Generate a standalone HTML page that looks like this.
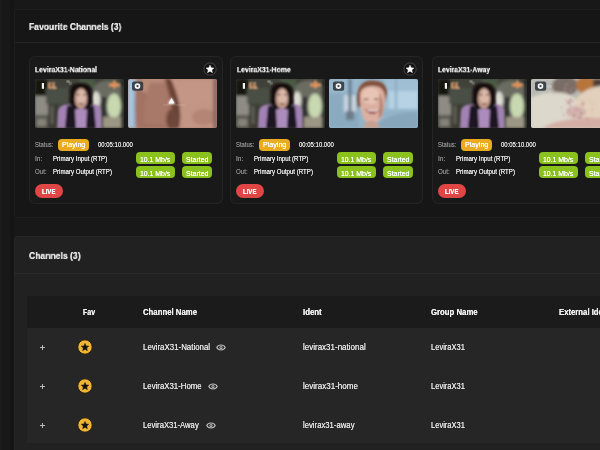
<!DOCTYPE html>
<html><head><meta charset="utf-8">
<style>
*{margin:0;padding:0;box-sizing:border-box}
html,body{width:600px;height:450px;overflow:hidden;background:#181818;font-family:"Liberation Sans",sans-serif;color:#e8e8e8}
.abs{position:absolute}
.abs svg{display:block}
.tx{position:absolute;white-space:nowrap;line-height:1;transform-origin:0 0;text-shadow:0 0 0.5px currentColor}
#fav{position:absolute;left:14px;top:9px;width:600px;height:209px;background:#161616;border:1px solid #1e1e1e;border-right:none;border-radius:3px 0 0 3px}
#favdiv{position:absolute;left:15px;top:42px;width:600px;height:1px;background:#252525}
.card{position:absolute;top:56px;width:193.5px;height:148px;background:#191919;box-shadow:inset 0 0 0 1px #242424;border-radius:6px}
.star{position:absolute;left:173.6px;top:6px;width:14px;height:14px}
.star svg{display:block}
.th{position:absolute;top:23px;width:89px;height:49px;border-radius:2px;overflow:hidden}
.th svg{display:block}
.badge{position:absolute;border-radius:4px}
.yel{background:#eaab1e}
.grn{background:#8bc11d}
.live{position:absolute;left:6px;top:128px;width:28px;height:14px;border-radius:7px;background:#e04646}
#ch{position:absolute;left:13.5px;top:236px;width:600px;height:230px;background:#212121;border-radius:4px;box-shadow:inset 1px 1px 0 #252525}
#chdiv{position:absolute;left:14px;top:273px;width:600px;height:1px;background:#2a2a2a}
#thead{position:absolute;left:27px;top:296px;width:600px;height:32px;background:#1b1b1b}
#tbody{position:absolute;left:27px;top:327.5px;width:600px;height:115.5px;background:#262626}
#band{position:absolute;left:10px;top:0;width:4px;height:450px;background:#151515}
#band0{position:absolute;left:0;top:0;width:2px;height:450px;background:#1b1b1b}

</style></head><body>
<svg width="0" height="0" style="position:absolute">
<defs>
<filter id="bl" x="-10%" y="-10%" width="120%" height="120%"><feGaussianBlur stdDeviation="0.9"/></filter>
<filter id="bl2" x="-10%" y="-10%" width="120%" height="120%"><feGaussianBlur stdDeviation="1.6"/></filter>
<g id="woman">
<rect width="89" height="49" fill="#40423a"/>
<g filter="url(#bl2)">
<rect x="0" y="0" width="12" height="18" fill="#121311"/>
<rect x="0" y="17" width="13" height="20" fill="#8e8c84"/>
<rect x="0" y="36" width="13" height="13" fill="#5a5850"/>
<rect x="2" y="40" width="9" height="7" fill="#86847a"/>
<rect x="11" y="9" width="22" height="16" fill="#485044"/>
<rect x="13" y="25" width="10" height="24" fill="#3a3a32"/>
<rect x="16" y="27" width="2" height="18" fill="#6a6a60"/>
<rect x="44" y="0" width="16" height="10" fill="#4c5a42"/>
<path d="M58 49 L58 14 C58 4 66 1 74 1 C82 1 87 6 87 14 L87 49 Z" fill="#6a6c62"/>
<ellipse cx="61" cy="21" rx="4.2" ry="8.5" fill="#dcdcd2"/>
<rect x="66" y="18" width="6" height="31" fill="#303230"/>
<ellipse cx="79" cy="27" rx="7" ry="12.5" fill="#c8d8b0"/>
<rect x="68" y="38" width="19" height="11" fill="#9c9684"/>
<rect x="86" y="0" width="3" height="49" fill="#1e201c"/>
</g>
<circle cx="33" cy="2.5" r="1.2" fill="#d8d8c8" filter="url(#bl)"/>
<circle cx="35.3" cy="4.3" r="1.1" fill="#c8c8b8" filter="url(#bl)"/>
<g filter="url(#bl)">
<path d="M35 16 C34 6 39 4 46 4 C53 4 58 7 57 16 L58.5 38 L34 38 Z" fill="#15110f"/>
<ellipse cx="46" cy="19.5" rx="6.4" ry="10.5" fill="#c09a8a"/>
<ellipse cx="46.5" cy="18" rx="4.5" ry="7.5" fill="#dab8a8"/>
<rect x="41.5" y="15" width="3" height="1.3" fill="#6a4a40"/><rect x="48" y="15" width="3" height="1.3" fill="#6a4a40"/>
<rect x="44" y="24" width="4.5" height="1.5" fill="#8a5a50"/>
<path d="M22 49 L23 32 C24 27 28 25.5 33 25.5 L37 26 L37 49 Z" fill="#a282b4"/>
<path d="M56 26 L59 25.5 C63 25.5 66 28 66 33 L66.5 49 L56 49 Z" fill="#a282b4"/>
<path d="M30 49 L32 27 L39 26 L42 49 Z M50 49 L53 26 L59 27 L61 49 Z" fill="#1e1820"/>
<path d="M41 49 L40 31 C42 29 50 29 52 31 L51 49 Z" fill="#ac8cbc"/>
</g>
<rect x="6.8" y="4" width="2.2" height="5.8" fill="#f2f2f2"/>
<path d="M13 3.5 h3 v2 h-1.5 v2 h2.5 v2 h-4 Z M17.5 3 h2 v5 h2 v2 h-4 Z" fill="#f2aa78" filter="url(#bl)"/>
<path d="M74 4.5 h11 v3 h-11 Z M78.2 1.5 h2.5 v8 h-2.5 Z" fill="#e8945c" filter="url(#bl)"/>
</g>

<g id="skin">
<rect width="89" height="49" fill="#b08070"/>
<g filter="url(#bl2)">
<path d="M0 0 L9 0 C7 12 6 28 8 49 L0 49 Z" fill="#98bcd8"/>
<path d="M0 0 L5 0 L4 49 L0 49 Z" fill="#a8c8e2"/>
<path d="M9 0 L41 0 C44 14 50 32 47 49 L8 49 C6 28 7 12 9 0 Z" fill="#a27262"/>
<ellipse cx="24" cy="6" rx="14" ry="9" fill="#b88a78"/>
<path d="M22 4 L38 4 C40 18 42 30 38 45 L16 45 C14 30 18 15 22 4 Z" fill="#a87868"/>
<path d="M37 0 C42 16 48 34 40 49 L52 49 C56 34 49 14 43 0 Z" fill="#6a4236"/>
<ellipse cx="44" cy="40" rx="6" ry="10" fill="#6e463a"/>
<path d="M43 0 L89 0 L89 49 L51 49 C55 34 50 14 43 0 Z" fill="#c39585"/>
<ellipse cx="68" cy="14" rx="18" ry="11" fill="#c49686"/>
<ellipse cx="76" cy="38" rx="12" ry="8" fill="#b48474"/>
<rect x="85" y="0" width="4" height="49" fill="#8a6a60"/>
</g>
<path d="M43.5 18.5 L47 25 L40 25 Z" fill="#f4f4f4" filter="url(#bl)"/>
<path d="M43.5 19 L46.5 24.5 L40.5 24.5 Z" fill="#fafafa"/>
<rect x="35" y="25.5" width="22" height="0.9" fill="#e8d8d0" opacity="0.3"/>
</g>

<g id="smile">
<rect width="89" height="49" fill="#94b4ca"/>
<g filter="url(#bl2)">
<rect x="0" y="0" width="30" height="49" fill="#8aaac0"/>
<rect x="0" y="0" width="30" height="14" fill="#9ab8cc"/>
<rect x="15" y="16" width="12" height="17" fill="#cad8e2"/>
<rect x="19.5" y="0" width="3" height="40" fill="#5e7284"/>
<rect x="17" y="32" width="8" height="9" fill="#6c7c86"/>
<rect x="56" y="0" width="33" height="30" fill="#a0bed4"/>
<rect x="60" y="12" width="29" height="18" fill="#b6d2e4"/>
<path d="M46 49 C52 40 62 34 89 33 L89 49 Z" fill="#86a6bc"/>
<rect x="66" y="0" width="2" height="30" fill="#88a8c0"/>
</g>
<g filter="url(#bl)">
<path d="M29 28 C26 9 32 1.5 43 1.5 C53 1.5 58 6 58 14 L56 24 C53 12 45 8 36 11 C33 16 32.5 22 31.5 28 Z" fill="#84523e"/>
<path d="M31 16 C31 9 37 7 44 7 C52 7 56 11 56 20 C56 33 52 44 43 45 C35 45 31 36 31 16 Z" fill="#dcb0a0"/>
<ellipse cx="42" cy="17" rx="9" ry="8" fill="#e8c4b4"/>
<path d="M50 14 C54 18 55 28 53 36 L49 40 C51 30 51 20 50 14 Z" fill="#b88474"/>
<rect x="35" y="19.5" width="4.5" height="1.6" fill="#8a6058"/><rect x="45" y="19.5" width="4.5" height="1.6" fill="#8a6058"/>
<path d="M36 30 C39 36 46 37 51 31 Z" fill="#9a4a4a"/>
<path d="M37.5 30.6 L49.5 30.8 L48.5 32.4 L38.8 32.2 Z" fill="#f2e8e4"/>
<path d="M34 49 C35 44 38 42 43 42 C48 42 50 46 51 49 Z" fill="#c8a090"/>
</g>
</g>

<g id="cream">
<rect width="89" height="49" fill="#cfc6bc"/>
<g filter="url(#bl2)">
<rect x="0" y="0" width="89" height="20" fill="#b8b8b2"/>
<ellipse cx="34" cy="7" rx="13" ry="10" fill="#7a6c66"/>
<ellipse cx="55" cy="6" rx="10" ry="9" fill="#b8743a"/>
<rect x="62" y="0" width="27" height="8" fill="#4e3e34"/>
<path d="M0 49 L0 19 C8 14 22 12 34 14 C42 16 48 22 50 30 L50 49 Z" fill="#dcd8cc"/>
<path d="M44 22 C48 14 58 8 70 7 C78 7 89 8 89 12 L89 40 L52 40 Z" fill="#e2d0bc"/>
<ellipse cx="45" cy="33" rx="10" ry="6" fill="#d2b2ac"/>
<path d="M12 49 C26 39 55 38 89 39 L89 49 Z" fill="#d4aea4"/>
</g>
<g opacity="0.6" filter="url(#bl)"><circle cx="23.8" cy="11.6" r="0.65" fill="#b09890"/><circle cx="35.1" cy="5.5" r="1.05" fill="#b09890"/><circle cx="22.8" cy="14.4" r="0.72" fill="#b09890"/><circle cx="41.2" cy="9.5" r="1.10" fill="#b09890"/><circle cx="29.8" cy="12.8" r="0.56" fill="#b09890"/><circle cx="36.2" cy="9.7" r="0.79" fill="#b09890"/><circle cx="33.9" cy="13.0" r="0.83" fill="#b09890"/><circle cx="36.6" cy="5.8" r="0.90" fill="#b09890"/><circle cx="22.8" cy="7.4" r="0.64" fill="#b09890"/><circle cx="33.0" cy="12.8" r="0.94" fill="#b09890"/><circle cx="33.7" cy="9.3" r="1.19" fill="#b09890"/><circle cx="38.5" cy="2.4" r="0.82" fill="#b09890"/><circle cx="39.3" cy="11.7" r="1.17" fill="#b09890"/><circle cx="34.5" cy="13.6" r="1.10" fill="#b09890"/></g>
<g opacity="0.75" filter="url(#bl)"><circle cx="37.6" cy="30.9" r="0.62" fill="#a86070"/><circle cx="50.0" cy="21.3" r="0.41" fill="#a86070"/><circle cx="38.3" cy="24.7" r="1.00" fill="#a86070"/><circle cx="47.3" cy="31.0" r="0.64" fill="#b86a7a"/><circle cx="37.4" cy="23.0" r="0.96" fill="#a86070"/><circle cx="53.7" cy="33.4" r="0.44" fill="#c07a8a"/><circle cx="39.6" cy="20.6" r="0.92" fill="#a86070"/><circle cx="49.0" cy="38.4" r="0.63" fill="#a86070"/><circle cx="42.6" cy="36.0" r="0.67" fill="#b86a7a"/><circle cx="58.1" cy="21.9" r="0.48" fill="#b86a7a"/><circle cx="38.3" cy="33.4" r="0.87" fill="#d09aa4"/><circle cx="43.5" cy="36.7" r="0.74" fill="#a86070"/><circle cx="48.7" cy="38.1" r="0.81" fill="#c07a8a"/><circle cx="57.4" cy="39.8" r="0.80" fill="#b86a7a"/><circle cx="52.4" cy="26.5" r="0.73" fill="#c07a8a"/><circle cx="52.8" cy="24.2" r="0.90" fill="#d09aa4"/><circle cx="39.1" cy="21.3" r="0.91" fill="#a86070"/><circle cx="32.8" cy="36.0" r="0.65" fill="#b86a7a"/><circle cx="30.6" cy="28.5" r="0.65" fill="#c07a8a"/><circle cx="31.4" cy="32.3" r="0.43" fill="#d09aa4"/><circle cx="47.6" cy="38.4" r="0.57" fill="#b86a7a"/><circle cx="62.0" cy="26.2" r="0.45" fill="#c07a8a"/><circle cx="60.4" cy="39.4" r="0.57" fill="#d09aa4"/><circle cx="35.0" cy="20.8" r="0.92" fill="#d09aa4"/><circle cx="41.5" cy="22.8" r="0.92" fill="#a86070"/><circle cx="44.7" cy="30.4" r="0.79" fill="#c07a8a"/><circle cx="49.8" cy="38.8" r="0.70" fill="#a86070"/><circle cx="50.3" cy="34.3" r="0.96" fill="#a86070"/><circle cx="61.3" cy="30.4" r="0.73" fill="#c07a8a"/><circle cx="55.2" cy="39.7" r="0.59" fill="#a86070"/><circle cx="49.7" cy="32.6" r="0.44" fill="#d09aa4"/><circle cx="44.9" cy="33.6" r="0.61" fill="#d09aa4"/><circle cx="53.6" cy="20.4" r="0.44" fill="#c07a8a"/><circle cx="60.8" cy="25.0" r="0.67" fill="#d09aa4"/><circle cx="35.7" cy="23.7" r="0.85" fill="#d09aa4"/><circle cx="39.6" cy="27.5" r="0.86" fill="#c07a8a"/><circle cx="61.1" cy="33.7" r="0.48" fill="#b86a7a"/><circle cx="50.9" cy="25.4" r="0.60" fill="#a86070"/><circle cx="50.8" cy="21.9" r="0.76" fill="#d09aa4"/><circle cx="51.6" cy="24.5" r="0.89" fill="#b86a7a"/></g>
<path d="M16 7.2 L18 6.2 L18 8.2 Z M18.5 7.2 L20.5 6.2 L20.5 8.2 Z" fill="#f0f0f0" filter="url(#bl)"/>
</g>

<g id="cam">
<rect x="0" y="0" width="11.2" height="9.2" rx="2" fill="#2c343c" opacity="0.88"/>
<circle cx="5.5" cy="4.6" r="2.0" fill="none" stroke="#f4f4f4" stroke-width="1.7"/>
</g>
</defs>
</svg>

<div id="band0"></div><div id="band"></div>
<div id="fav"></div>
<div id="favdiv"></div>
<div class="card" style="left:29px">
<div class="star"><svg width="14" height="14" viewBox="0 0 14 14"><circle cx="7" cy="7" r="6.2" fill="#121212" stroke="#3a3a3a" stroke-width="1.2"/><path d="M7.00 3.10 L8.12 5.76 L10.99 6.00 L8.81 7.89 L9.47 10.70 L7.00 9.20 L4.53 10.70 L5.19 7.89 L3.01 6.00 L5.88 5.76 Z" fill="#fff" stroke="#fff" stroke-width="0.4" stroke-linejoin="round"/></svg></div>
<div class="th" style="left:6px"><svg width="89" height="49" viewBox="0 0 89 49"><use href="#woman"/></svg></div>
<div class="th" style="left:99px"><svg width="89" height="49" viewBox="0 0 89 49"><use href="#skin"/><use href="#cam" x="4" y="2.5"/></svg></div>
<div class="badge yel" style="left:29px;top:83px;width:31px;height:12px"></div>
<div class="badge grn" style="left:107px;top:96.3px;width:39px;height:11.5px"></div>
<div class="badge grn" style="left:153px;top:96.3px;width:30px;height:11.5px"></div>
<div class="badge grn" style="left:107px;top:110.4px;width:39px;height:11.5px"></div>
<div class="badge grn" style="left:153px;top:110.4px;width:30px;height:11.5px"></div>
<div class="live"></div>
</div>
<div class="card" style="left:229.8px">
<div class="star"><svg width="14" height="14" viewBox="0 0 14 14"><circle cx="7" cy="7" r="6.2" fill="#121212" stroke="#3a3a3a" stroke-width="1.2"/><path d="M7.00 3.10 L8.12 5.76 L10.99 6.00 L8.81 7.89 L9.47 10.70 L7.00 9.20 L4.53 10.70 L5.19 7.89 L3.01 6.00 L5.88 5.76 Z" fill="#fff" stroke="#fff" stroke-width="0.4" stroke-linejoin="round"/></svg></div>
<div class="th" style="left:6px"><svg width="89" height="49" viewBox="0 0 89 49"><use href="#woman"/></svg></div>
<div class="th" style="left:99px"><svg width="89" height="49" viewBox="0 0 89 49"><use href="#smile"/><use href="#cam" x="4" y="2.5"/></svg></div>
<div class="badge yel" style="left:29px;top:83px;width:31px;height:12px"></div>
<div class="badge grn" style="left:107px;top:96.3px;width:39px;height:11.5px"></div>
<div class="badge grn" style="left:153px;top:96.3px;width:30px;height:11.5px"></div>
<div class="badge grn" style="left:107px;top:110.4px;width:39px;height:11.5px"></div>
<div class="badge grn" style="left:153px;top:110.4px;width:30px;height:11.5px"></div>
<div class="live"></div>
</div>
<div class="card" style="left:432px">
<div class="th" style="left:6px"><svg width="89" height="49" viewBox="0 0 89 49"><use href="#woman"/></svg></div>
<div class="th" style="left:99px"><svg width="89" height="49" viewBox="0 0 89 49"><use href="#cream"/><use href="#cam" x="4" y="2.5"/></svg></div>
<div class="badge yel" style="left:29px;top:83px;width:31px;height:12px"></div>
<div class="badge grn" style="left:107px;top:96.3px;width:39px;height:11.5px"></div>
<div class="badge grn" style="left:153px;top:96.3px;width:30px;height:11.5px"></div>
<div class="badge grn" style="left:107px;top:110.4px;width:39px;height:11.5px"></div>
<div class="badge grn" style="left:153px;top:110.4px;width:30px;height:11.5px"></div>
<div class="live"></div>
</div>
<div id="ch"></div>
<div id="chdiv"></div>
<div id="thead"></div>
<div id="tbody"></div>
<div class="abs" style="left:39.1px;top:344.0px"><svg width="7" height="7" viewBox="0 0 7 7"><path d="M3.5 1 V6 M1 3.5 H6" stroke="#c8c8c8" stroke-width="0.9"/></svg></div>
<div class="abs" style="left:77px;top:339.0px"><svg width="16" height="16" viewBox="0 0 16 16"><circle cx="8" cy="8" r="7.2" fill="#efb537" stroke="#2a1f08" stroke-width="1"/><path d="M8.00 4.40 L9.03 6.98 L11.80 7.16 L9.66 8.94 L10.35 11.64 L8.00 10.15 L5.65 11.64 L6.34 8.94 L4.20 7.16 L6.97 6.98 Z" fill="#111" stroke="#111" stroke-width="0.5" stroke-linejoin="round"/></svg></div>
<div class="abs" style="left:216.3px;top:343.7px"><svg width="10" height="7" viewBox="0 0 10 7"><path d="M0.8 3.5 C2.2 0.2 7.8 0.2 9.2 3.5 C7.8 6.8 2.2 6.8 0.8 3.5 Z" fill="none" stroke="#bdbdbd" stroke-width="1.05"/><circle cx="5" cy="3.5" r="1.5" fill="#bdbdbd"/><circle cx="5" cy="3.5" r="0.6" fill="#262626"/></svg></div>
<div class="abs" style="left:39.1px;top:383.0px"><svg width="7" height="7" viewBox="0 0 7 7"><path d="M3.5 1 V6 M1 3.5 H6" stroke="#c8c8c8" stroke-width="0.9"/></svg></div>
<div class="abs" style="left:77px;top:378.0px"><svg width="16" height="16" viewBox="0 0 16 16"><circle cx="8" cy="8" r="7.2" fill="#efb537" stroke="#2a1f08" stroke-width="1"/><path d="M8.00 4.40 L9.03 6.98 L11.80 7.16 L9.66 8.94 L10.35 11.64 L8.00 10.15 L5.65 11.64 L6.34 8.94 L4.20 7.16 L6.97 6.98 Z" fill="#111" stroke="#111" stroke-width="0.5" stroke-linejoin="round"/></svg></div>
<div class="abs" style="left:208.3px;top:382.7px"><svg width="10" height="7" viewBox="0 0 10 7"><path d="M0.8 3.5 C2.2 0.2 7.8 0.2 9.2 3.5 C7.8 6.8 2.2 6.8 0.8 3.5 Z" fill="none" stroke="#bdbdbd" stroke-width="1.05"/><circle cx="5" cy="3.5" r="1.5" fill="#bdbdbd"/><circle cx="5" cy="3.5" r="0.6" fill="#262626"/></svg></div>
<div class="abs" style="left:39.1px;top:422.0px"><svg width="7" height="7" viewBox="0 0 7 7"><path d="M3.5 1 V6 M1 3.5 H6" stroke="#c8c8c8" stroke-width="0.9"/></svg></div>
<div class="abs" style="left:77px;top:417.0px"><svg width="16" height="16" viewBox="0 0 16 16"><circle cx="8" cy="8" r="7.2" fill="#efb537" stroke="#2a1f08" stroke-width="1"/><path d="M8.00 4.40 L9.03 6.98 L11.80 7.16 L9.66 8.94 L10.35 11.64 L8.00 10.15 L5.65 11.64 L6.34 8.94 L4.20 7.16 L6.97 6.98 Z" fill="#111" stroke="#111" stroke-width="0.5" stroke-linejoin="round"/></svg></div>
<div class="abs" style="left:205.8px;top:421.7px"><svg width="10" height="7" viewBox="0 0 10 7"><path d="M0.8 3.5 C2.2 0.2 7.8 0.2 9.2 3.5 C7.8 6.8 2.2 6.8 0.8 3.5 Z" fill="none" stroke="#bdbdbd" stroke-width="1.05"/><circle cx="5" cy="3.5" r="1.5" fill="#bdbdbd"/><circle cx="5" cy="3.5" r="0.6" fill="#262626"/></svg></div>

<div class="tx" style="left:28.80px;top:23.20px;font-size:10.000px;font-weight:bold;color:#ededed;transform:scale(0.8561,0.8750);will-change:transform">Favourite Channels (3)</div>
<div class="tx" style="left:28.70px;top:252.00px;font-size:10.000px;font-weight:bold;color:#ededed;transform:scale(0.8596,0.8750);will-change:transform">Channels (3)</div>
<div class="tx" style="left:35.00px;top:66.10px;font-size:8.400px;font-weight:bold;color:#f2f2f2;transform:scale(0.8218,0.9000);will-change:transform">LeviraX31-National</div>
<div class="tx" style="left:35.00px;top:142.00px;font-size:6.800px;font-weight:normal;color:#8a8a8a;transform:scale(0.8604,1.0000)">Status:</div>
<div class="tx" style="left:61.70px;top:141.30px;font-size:7.200px;font-weight:normal;color:#ffffff;transform:scale(0.9883,1.0000)">Playing</div>
<div class="tx" style="left:98.00px;top:142.00px;font-size:6.800px;font-weight:normal;color:#e6e6e6;transform:scale(0.8771,1.0000)">00:05:10.000</div>
<div class="tx" style="left:35.00px;top:156.10px;font-size:6.800px;font-weight:normal;color:#8a8a8a;transform:scale(0.9780,1.0000)">In:</div>
<div class="tx" style="left:53.00px;top:156.10px;font-size:6.800px;font-weight:normal;color:#ececec;transform:scale(0.8994,1.0000)">Primary Input (RTP)</div>
<div class="tx" style="left:35.00px;top:169.20px;font-size:6.800px;font-weight:normal;color:#8a8a8a;transform:scale(0.9031,1.0000)">Out:</div>
<div class="tx" style="left:53.00px;top:169.20px;font-size:6.800px;font-weight:normal;color:#ececec;transform:scale(0.8986,1.0000)">Primary Output (RTP)</div>
<div class="tx" style="left:140.20px;top:155.70px;font-size:7.300px;font-weight:normal;color:#ffffff;transform:scale(0.9446,1.0000)">10.1 Mb/s</div>
<div class="tx" style="left:185.80px;top:155.70px;font-size:7.300px;font-weight:normal;color:#ffffff;transform:scale(0.9545,1.0000)">Started</div>
<div class="tx" style="left:140.20px;top:169.80px;font-size:7.300px;font-weight:normal;color:#ffffff;transform:scale(0.9446,1.0000)">10.1 Mb/s</div>
<div class="tx" style="left:185.80px;top:169.80px;font-size:7.300px;font-weight:normal;color:#ffffff;transform:scale(0.9545,1.0000)">Started</div>
<div class="tx" style="left:42.00px;top:188.00px;font-size:7.000px;font-weight:bold;color:#ffffff;transform:scale(0.8622,1.0000)">LIVE</div>
<div class="tx" style="left:236.70px;top:66.10px;font-size:8.400px;font-weight:bold;color:#f2f2f2;transform:scale(0.8185,0.9000);will-change:transform">LeviraX31-Home</div>
<div class="tx" style="left:235.80px;top:142.00px;font-size:6.800px;font-weight:normal;color:#8a8a8a;transform:scale(0.8604,1.0000)">Status:</div>
<div class="tx" style="left:262.50px;top:141.30px;font-size:7.200px;font-weight:normal;color:#ffffff;transform:scale(0.9883,1.0000)">Playing</div>
<div class="tx" style="left:298.80px;top:142.00px;font-size:6.800px;font-weight:normal;color:#e6e6e6;transform:scale(0.8771,1.0000)">00:05:10.000</div>
<div class="tx" style="left:235.80px;top:156.10px;font-size:6.800px;font-weight:normal;color:#8a8a8a;transform:scale(0.9780,1.0000)">In:</div>
<div class="tx" style="left:253.80px;top:156.10px;font-size:6.800px;font-weight:normal;color:#ececec;transform:scale(0.8994,1.0000)">Primary Input (RTP)</div>
<div class="tx" style="left:235.80px;top:169.20px;font-size:6.800px;font-weight:normal;color:#8a8a8a;transform:scale(0.9031,1.0000)">Out:</div>
<div class="tx" style="left:253.80px;top:169.20px;font-size:6.800px;font-weight:normal;color:#ececec;transform:scale(0.8986,1.0000)">Primary Output (RTP)</div>
<div class="tx" style="left:341.00px;top:155.70px;font-size:7.300px;font-weight:normal;color:#ffffff;transform:scale(0.9446,1.0000)">10.1 Mb/s</div>
<div class="tx" style="left:386.60px;top:155.70px;font-size:7.300px;font-weight:normal;color:#ffffff;transform:scale(0.9545,1.0000)">Started</div>
<div class="tx" style="left:341.00px;top:169.80px;font-size:7.300px;font-weight:normal;color:#ffffff;transform:scale(0.9446,1.0000)">10.1 Mb/s</div>
<div class="tx" style="left:386.60px;top:169.80px;font-size:7.300px;font-weight:normal;color:#ffffff;transform:scale(0.9545,1.0000)">Started</div>
<div class="tx" style="left:242.80px;top:188.00px;font-size:7.000px;font-weight:bold;color:#ffffff;transform:scale(0.8622,1.0000)">LIVE</div>
<div class="tx" style="left:437.70px;top:66.10px;font-size:8.400px;font-weight:bold;color:#f2f2f2;transform:scale(0.8117,0.9000);will-change:transform">LeviraX31-Away</div>
<div class="tx" style="left:438.00px;top:142.00px;font-size:6.800px;font-weight:normal;color:#8a8a8a;transform:scale(0.8604,1.0000)">Status:</div>
<div class="tx" style="left:464.70px;top:141.30px;font-size:7.200px;font-weight:normal;color:#ffffff;transform:scale(0.9883,1.0000)">Playing</div>
<div class="tx" style="left:501.00px;top:142.00px;font-size:6.800px;font-weight:normal;color:#e6e6e6;transform:scale(0.8771,1.0000)">00:05:10.000</div>
<div class="tx" style="left:438.00px;top:156.10px;font-size:6.800px;font-weight:normal;color:#8a8a8a;transform:scale(0.9780,1.0000)">In:</div>
<div class="tx" style="left:456.00px;top:156.10px;font-size:6.800px;font-weight:normal;color:#ececec;transform:scale(0.8994,1.0000)">Primary Input (RTP)</div>
<div class="tx" style="left:438.00px;top:169.20px;font-size:6.800px;font-weight:normal;color:#8a8a8a;transform:scale(0.9031,1.0000)">Out:</div>
<div class="tx" style="left:456.00px;top:169.20px;font-size:6.800px;font-weight:normal;color:#ececec;transform:scale(0.8986,1.0000)">Primary Output (RTP)</div>
<div class="tx" style="left:543.20px;top:155.70px;font-size:7.300px;font-weight:normal;color:#ffffff;transform:scale(0.9446,1.0000)">10.1 Mb/s</div>
<div class="tx" style="left:588.80px;top:155.70px;font-size:7.300px;font-weight:normal;color:#ffffff;transform:scale(0.9545,1.0000)">Started</div>
<div class="tx" style="left:543.20px;top:169.80px;font-size:7.300px;font-weight:normal;color:#ffffff;transform:scale(0.9446,1.0000)">10.1 Mb/s</div>
<div class="tx" style="left:588.80px;top:169.80px;font-size:7.300px;font-weight:normal;color:#ffffff;transform:scale(0.9545,1.0000)">Started</div>
<div class="tx" style="left:445.00px;top:188.00px;font-size:7.000px;font-weight:bold;color:#ffffff;transform:scale(0.8622,1.0000)">LIVE</div>
<div class="tx" style="left:83.00px;top:307.90px;font-size:9.000px;font-weight:bold;color:#f0f0f0;transform:scale(0.7740,1.0000)">Fav</div>
<div class="tx" style="left:142.70px;top:307.90px;font-size:9.000px;font-weight:bold;color:#f0f0f0;transform:scale(0.8638,1.0000)">Channel Name</div>
<div class="tx" style="left:303.00px;top:307.90px;font-size:9.000px;font-weight:bold;color:#f0f0f0;transform:scale(0.8697,1.0000)">Ident</div>
<div class="tx" style="left:430.70px;top:307.90px;font-size:9.000px;font-weight:bold;color:#f0f0f0;transform:scale(0.8629,1.0000)">Group Name</div>
<div class="tx" style="left:558.70px;top:307.90px;font-size:9.000px;font-weight:bold;color:#f0f0f0;transform:scale(0.8600,1.0000)">External Identifier</div>
<div class="tx" style="left:143.00px;top:343.00px;font-size:8.900px;font-weight:normal;color:#e4e4e4;transform:scale(0.8886,1.0000)">LeviraX31-National</div>
<div class="tx" style="left:303.00px;top:343.00px;font-size:8.900px;font-weight:normal;color:#e4e4e4;transform:scale(0.9010,1.0000)">levirax31-national</div>
<div class="tx" style="left:430.70px;top:343.00px;font-size:8.900px;font-weight:normal;color:#e4e4e4;transform:scale(0.8494,1.0000)">LeviraX31</div>
<div class="tx" style="left:143.00px;top:382.00px;font-size:8.900px;font-weight:normal;color:#e4e4e4;transform:scale(0.8806,1.0000)">LeviraX31-Home</div>
<div class="tx" style="left:303.00px;top:382.00px;font-size:8.900px;font-weight:normal;color:#e4e4e4;transform:scale(0.9055,1.0000)">levirax31-home</div>
<div class="tx" style="left:430.70px;top:382.00px;font-size:8.900px;font-weight:normal;color:#e4e4e4;transform:scale(0.8494,1.0000)">LeviraX31</div>
<div class="tx" style="left:143.00px;top:421.00px;font-size:8.900px;font-weight:normal;color:#e4e4e4;transform:scale(0.8643,1.0000)">LeviraX31-Away</div>
<div class="tx" style="left:303.00px;top:421.00px;font-size:8.900px;font-weight:normal;color:#e4e4e4;transform:scale(0.8702,1.0000)">levirax31-away</div>
<div class="tx" style="left:430.70px;top:421.00px;font-size:8.900px;font-weight:normal;color:#e4e4e4;transform:scale(0.8494,1.0000)">LeviraX31</div>
</body></html>
